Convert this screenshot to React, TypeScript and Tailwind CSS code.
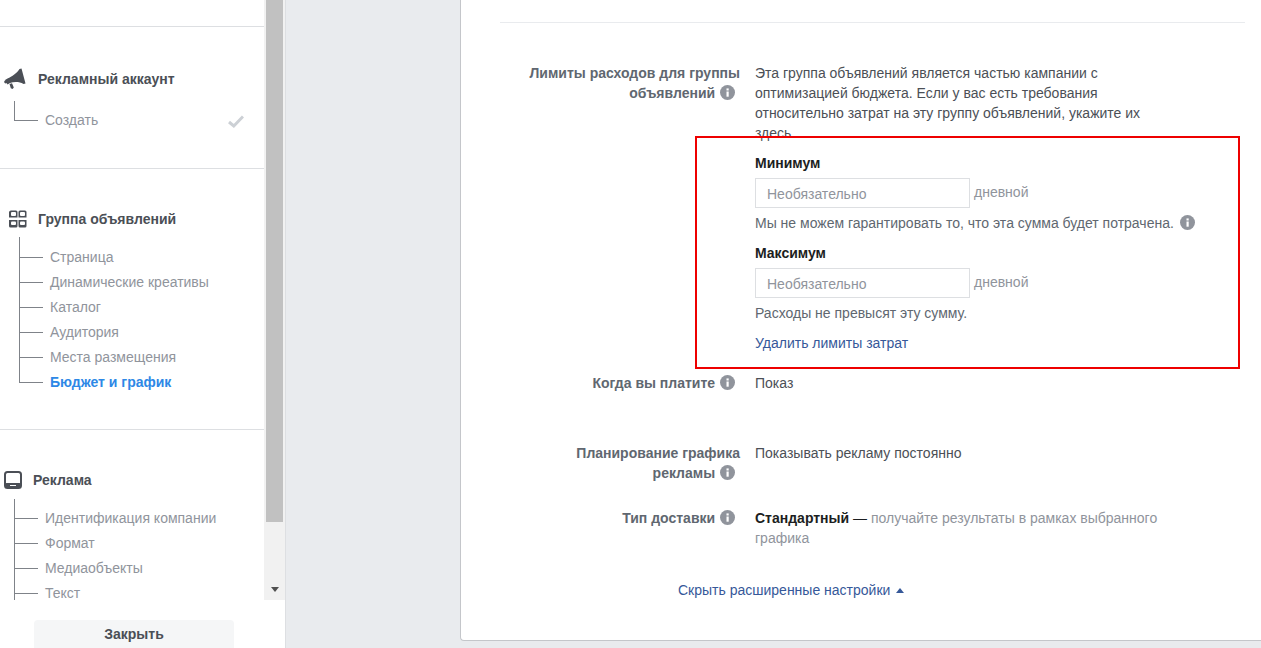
import React from "react";

function InfoIcon({ className = "" }: { className?: string }) {
  return (
    <svg width="15" height="15" viewBox="0 0 15 15" className={`inline-block align-[-2px] ${className}`}>
      <circle cx="7.5" cy="7.5" r="7.5" fill="#90949c" />
      <rect x="6.5" y="6.5" width="2.2" height="5.2" fill="#fff" />
      <rect x="6.5" y="3.4" width="2.2" height="2.1" fill="#fff" />
    </svg>
  );
}

function MegaphoneIcon() {
  return (
    <svg width="22" height="22" viewBox="0 0 22 22" className="shrink-0">
      <path d="M17.5 0.5 L21.5 15.5 L19.5 16 C15.5 13.5 10 13.5 6 15 L3.5 16.5 L1 12 L3.5 10.5 C8 8.5 13 5 15.5 1 Z" fill="#4b4f56" />
      <path d="M5.5 16 L8 15.2 L9.8 19.5 L8.6 21 L6.8 20.2 Z" fill="#4b4f56" />
      <circle cx="1.8" cy="13.8" r="1.6" fill="#4b4f56" />
    </svg>
  );
}

function GroupIcon() {
  return (
    <svg width="18" height="18" viewBox="0 0 18 18" className="shrink-0">
      <path d="M2 0.5h5a1.5 1.5 0 0 1 1.5 1.5v5.5h-8.5v-5.5a2 2 0 0 1 2-1.5z M11 0.5h5a1.5 1.5 0 0 1 1.5 1.5v5.5h-8v-5.5a1.5 1.5 0 0 1 1.5-1.5z" fill="#4b4f56" />
      <rect x="2" y="2" width="5" height="4" rx="1" fill="#fff" />
      <rect x="11" y="2" width="5" height="4" rx="1" fill="#fff" />
      <path d="M0 10h8.5v6a1.5 1.5 0 0 1-1.5 1.5h-5.5a1.5 1.5 0 0 1-1.5-1.5z M9.5 10h8v6a1.5 1.5 0 0 1-1.5 1.5h-5a1.5 1.5 0 0 1-1.5-1.5z" fill="#4b4f56" />
      <rect x="2" y="11.5" width="5" height="3.5" rx="1" fill="#fff" />
      <rect x="11" y="11.5" width="5" height="3.5" rx="1" fill="#fff" />
    </svg>
  );
}

function AdIcon() {
  return (
    <svg width="18" height="18" viewBox="0 0 18 18" className="shrink-0">
      <rect x="1" y="1" width="16" height="16" rx="2.5" fill="none" stroke="#4b4f56" strokeWidth="2" />
      <rect x="1" y="12" width="16" height="5" rx="1.5" fill="#4b4f56" />
      <rect x="6" y="14" width="6" height="1" fill="#fff" />
    </svg>
  );
}

function SectionHeading({ icon, title, gap }: { icon: React.ReactNode; title: string; gap: string }) {
  return (
    <div className={`flex h-5 items-center ${gap}`}>
      {icon}
      <span className="text-sm font-bold text-[#4b4f56]">{title}</span>
    </div>
  );
}

function TreeRow({ label, last, active, done }: { label: string; last?: boolean; active?: boolean; done?: boolean }) {
  return (
    <div className="flex h-[25px]">
      <div className="w-6 shrink-0">
        <div className="h-[13px] border-b border-l border-[#7f8389]" />
        {!last && <div className="h-3 border-l border-[#7f8389]" />}
      </div>
      <span className={`ml-[7px] text-sm leading-[25px] ${active ? "font-bold text-[#2d88e6]" : "text-[#90949c]"}`}>{label}</span>
      {done && (
        <svg width="16" height="13" viewBox="0 0 16 13" className="ml-auto mr-5 mt-[7px]">
          <path d="M1 7 L5.8 11 L15 1.5" fill="none" stroke="#ccd0d5" strokeWidth="3" />
        </svg>
      )}
    </div>
  );
}

function Tree({ items, stem, className }: { items: string[]; stem: string; className: string }) {
  return (
    <div className={className}>
      <div className={`${stem} border-l border-[#7f8389]`} />
      {items.map((item, i) => (
        <TreeRow
          key={item}
          label={item}
          last={item === "Бюджет и график" || item === "Создать"}
          active={item === "Бюджет и график"}
          done={item === "Создать"}
        />
      ))}
    </div>
  );
}

function Sidebar() {
  return (
    <aside className="flex h-full w-[286px] shrink-0 flex-col border-r border-[#dddfe2] bg-white">
      <div className="flex h-[600px] overflow-hidden">
        <div className="w-[264px] shrink-0">
          <div className="h-[27px] border-b border-[#dddfe2]" />
          <div className="h-[142px] border-b border-[#dddfe2] pt-[42px]">
            <SectionHeading icon={<MegaphoneIcon />} title="Рекламный аккаунт" gap="gap-3 pl-1" />
            <Tree items={["Создать"]} stem="h-[7px]" className="ml-[14px] mt-3" />
          </div>
          <div className="h-[261px] border-b border-[#dddfe2] pt-10">
            <SectionHeading icon={<GroupIcon />} title="Группа объявлений" gap="gap-[11px] pl-[9px]" />
            <Tree
              items={["Страница", "Динамические креативы", "Каталог", "Аудитория", "Места размещения", "Бюджет и график"]}
              stem="h-[8px]"
              className="ml-[19px] mt-2"
            />
          </div>
          <div className="pt-10">
            <SectionHeading icon={<AdIcon />} title="Реклама" gap="gap-[11px] pl-1" />
            <Tree
              items={["Идентификация компании", "Формат", "Медиаобъекты", "Текст"]}
              stem="h-[7px]"
              className="ml-[14px] mt-[9px]"
            />
          </div>
        </div>
        <div className="relative w-[21px] shrink-0 bg-[#f1f1f1]">
          <div className="ml-0.5 h-[522px] w-[17px] bg-[#c1c1c1]" />
          <div className="absolute bottom-[8px] left-[7px] h-0 w-0 border-x-4 border-t-[5px] border-x-transparent border-t-[#505050]" />
        </div>
      </div>
      <div className="ml-[34px] mt-5 flex h-7 w-[200px] items-center justify-center rounded-t bg-[#f5f6f7] text-sm font-bold text-[#4b4f56]">
        Закрыть
      </div>
    </aside>
  );
}

function Label({ children }: { children: React.ReactNode }) {
  return <div className="w-60 shrink-0 text-right text-sm font-bold leading-5 text-[#606770]">{children}</div>;
}

function LimitField({ title, note }: { title: string; note: React.ReactNode }) {
  return (
    <>
      <div className="text-sm font-bold leading-5 text-[#1c1e21]">{title}</div>
      <div className="mt-[5px] flex items-start">
        <div className="flex h-[30px] w-[215px] items-center border border-[#dddfe2] pl-[11px] pt-px text-sm text-[#90949c]">Необязательно</div>
        <span className="ml-1 mt-[4px] text-sm leading-5 text-[#90949c]">дневной</span>
      </div>
      <div className="mt-[5px] text-sm leading-5 text-[#606770]">{note}</div>
    </>
  );
}

export default function App() {
  return (
    <div className="relative flex h-[648px] w-[1261px] overflow-hidden bg-[#e9ebee] [font-family:'Liberation_Sans',Arial,sans-serif]">
      <Sidebar />
      <main className="flex-1 pl-[174px]">
        <div className="h-[641px] rounded-bl border-b border-l border-[#c4c6ca] bg-white pl-[39px] pr-4 pt-[22px]">
          <div className="border-t border-[#e9ebee]" />
          <div className="mt-10 flex gap-[15px]">
            <Label>
              Лимиты расходов для группы
              <br />
              объявлений <InfoIcon className="ml-px mr-[5px]" />
            </Label>
            <div className="flex-1 text-sm leading-5 text-[#4b4f56]">
              <p className="w-[400px]">
                Эта группа объявлений является частью кампании с оптимизацией бюджета. Если у вас есть требования
                относительно затрат на эту группу объявлений, укажите их здесь.
              </p>
              <div className="mt-[10px]">
                <LimitField
                  title="Минимум"
                  note={
                    <>
                      Мы не можем гарантировать то, что эта сумма будет потрачена. <InfoIcon className="ml-[2px]" />
                    </>
                  }
                />
              </div>
              <div className="mt-[10px]">
                <LimitField title="Максимум" note="Расходы не превысят эту сумму." />
              </div>
              <a className="mt-[10px] block text-[#365899]">Удалить лимиты затрат</a>
            </div>
          </div>
          <div className="mt-5 flex gap-[15px]">
            <Label>
              Когда вы платите <InfoIcon className="ml-px mr-[5px]" />
            </Label>
            <div className="text-sm leading-5 text-[#4b4f56]">Показ</div>
          </div>
          <div className="mt-[50px] flex gap-[15px]">
            <Label>
              Планирование графика
              <br />
              рекламы <InfoIcon className="ml-px mr-[5px]" />
            </Label>
            <div className="text-sm leading-5 text-[#4b4f56]">Показывать рекламу постоянно</div>
          </div>
          <div className="mt-[25px] flex gap-[15px]">
            <Label>
              Тип доставки <InfoIcon className="ml-px mr-[5px]" />
            </Label>
            <div className="w-[440px] text-sm leading-5 text-[#90949c]">
              <span className="font-bold text-[#1c1e21]">Стандартный</span>{" "}
              <span className="text-[#1c1e21]">—</span> получайте результаты в рамках выбранного графика
            </div>
          </div>
          <div className="mt-8 flex items-center pl-[178px] text-sm leading-5 text-[#365899]">
            Скрыть расширенные настройки
            <span className="ml-[6px] h-0 w-0 border-x-[4.5px] border-b-[5px] border-x-transparent border-b-[#365899]" />
          </div>
        </div>
      </main>
      <div className="pointer-events-none absolute left-[695px] top-[136px] h-[233px] w-[545px] border-2 border-[#ee0000]" />
    </div>
  );
}
